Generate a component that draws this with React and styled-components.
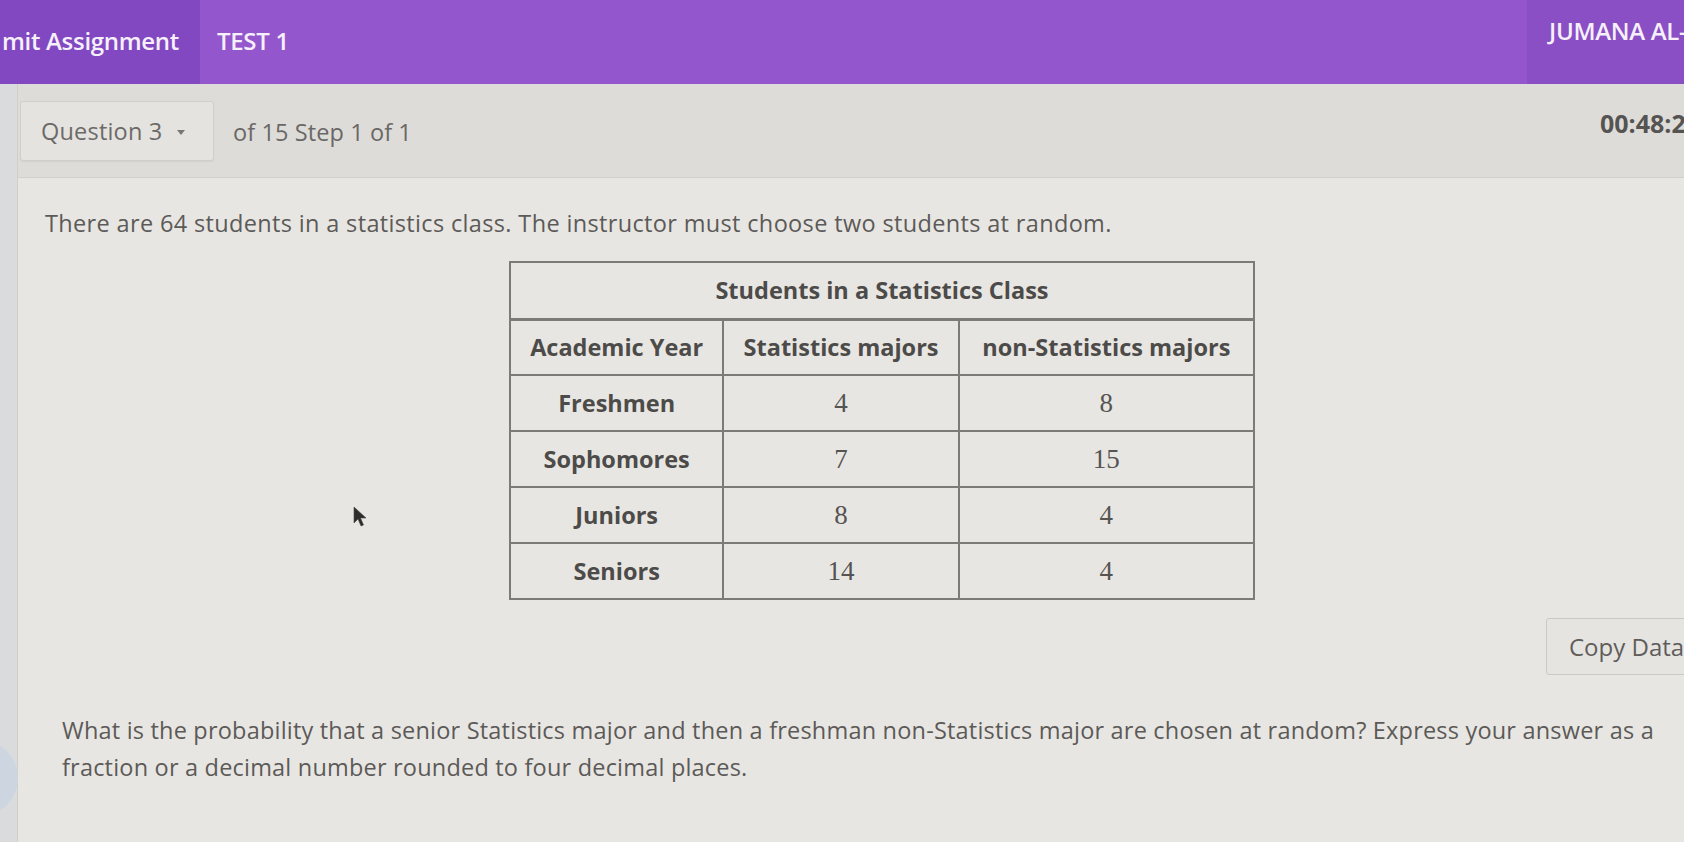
import React from "react";
import styled, { createGlobalStyle } from "styled-components";

const Global = createGlobalStyle`
  html, body { margin: 0; padding: 0; }
  body { background: #e6e4e0; font-family: "Open Sans", "Liberation Sans", sans-serif; }
  * { box-sizing: border-box; }
`;

const Page = styled.div`
  position: relative;
  width: 1684px;
  height: 842px;
  overflow: hidden;
  display: flex;
  flex-direction: column;
  background: #e8e6e2;
`;

const Header = styled.header`
  height: 84px;
  flex: none;
  display: flex;
  align-items: stretch;
  background: #9456cc;
  color: #f6f0fb;
  font-weight: 600;
  font-size: 24px;
  letter-spacing: -0.3px;
`;

const HeaderTab = styled.div`
  display: flex;
  align-items: ${(p) => p.$align || "center"};
  justify-content: ${(p) => p.$justify || "flex-start"};
  width: ${(p) => p.$width || "auto"};
  padding: ${(p) => p.$pad || "0"};
  background: ${(p) => p.$bg || "transparent"};
  white-space: nowrap;
  overflow: hidden;
`;

const HeaderSpacer = styled.div`
  flex: 1;
`;

const Body = styled.div`
  flex: 1;
  display: flex;
  min-height: 0;
`;

const SideStrip = styled.div`
  width: 18px;
  flex: none;
  background: #d9dbdc;
  border-right: 1px solid #cfcfcd;
`;

const Main = styled.div`
  flex: 1;
  display: flex;
  flex-direction: column;
  min-width: 0;
`;

const Toolbar = styled.div`
  height: 94px;
  flex: none;
  display: flex;
  align-items: flex-start;
  padding: 17px 0 0 2px;
  background: #dedcd8;
  border-bottom: 1px solid #d2d0cc;
  overflow: hidden;
`;

const QuestionSelect = styled.div`
  width: 194px;
  height: 60px;
  display: flex;
  align-items: center;
  gap: 14px;
  padding-left: 20px;
  background: #e5e3df;
  border: 1px solid #d1cfcb;
  border-radius: 3px;
  box-shadow: 0 1px 1px rgba(0, 0, 0, 0.05);
  color: #6c6a68;
  font-size: 23.5px;
  letter-spacing: 0.2px;
`;

const Caret = styled.span`
  width: 0;
  height: 0;
  border-left: 4px solid transparent;
  border-right: 4px solid transparent;
  border-top: 5px solid #7a7876;
  margin-top: 3px;
`;

const StepText = styled.div`
  margin: 15px 0 0 19px;
  color: #6a6866;
  font-size: 23.5px;
  letter-spacing: 0.1px;
`;

const Timer = styled.div`
  margin: 5px -16px 0 auto;
  color: #555452;
  font-weight: 700;
  font-size: 25px;
  white-space: nowrap;
`;

const Content = styled.div`
  flex: 1;
  display: flex;
  flex-direction: column;
  padding: 29px 0 0 27px;
  position: relative;
  color: #5c5a58;
`;

const Intro = styled.p`
  margin: 0;
  font-size: 23.5px;
  line-height: 32px;
  letter-spacing: 0.35px;
`;

const Table = styled.table`
  margin: 22px 0 0 464px;
  border-collapse: collapse;
  width: 746px;
  border: 2px solid #7c7b79;
  color: #4c4b49;
`;

const TitleCell = styled.th`
  height: 57px;
  font-weight: 700;
  font-size: 23.5px;
  letter-spacing: 0px;
  border-bottom: 3px solid #7c7b79;
  text-align: center;
`;

const HeadCell = styled.th`
  height: 56px;
  width: ${(p) => p.$w}px;
  font-weight: 700;
  font-size: 23.5px;
  letter-spacing: 0px;
  border: 2px solid #7c7b79;
  text-align: center;
  white-space: nowrap;
  padding: 0;
`;

const RowHead = styled.th`
  height: 56px;
  font-weight: 700;
  font-size: 23.5px;
  letter-spacing: 0px;
  border: 2px solid #7c7b79;
  text-align: center;
`;

const NumCell = styled.td`
  height: 56px;
  font-family: "Liberation Serif", "Times New Roman", serif;
  font-size: 27px;
  color: #555452;
  border: 2px solid #7c7b79;
  text-align: center;
`;

const CopyRow = styled.div`
  display: flex;
  justify-content: flex-end;
  margin-top: 18px;
  margin-right: -52px;
`;

const CopyButton = styled.button`
  height: 57px;
  width: 190px;
  padding: 0 0 0 22px;
  text-align: left;
  background: #e6e4e0;
  border: 1px solid #cbc9c5;
  border-radius: 3px;
  font-family: "Open Sans", "Liberation Sans", sans-serif;
  font-size: 24px;
  color: #5f5d5b;
  white-space: nowrap;
`;

const Question = styled.p`
  margin: 37px 0 0 17px;
  width: 1630px;
  font-size: 23.5px;
  line-height: 37px;
  letter-spacing: 0.2px;
`;

const HelpBubble = styled.div`
  position: absolute;
  left: -58px;
  top: 740px;
  width: 76px;
  height: 76px;
  border-radius: 50%;
  background: #cdd6e0;
`;

const Cursor = styled.svg`
  position: absolute;
  left: 352px;
  top: 506px;
`;

const rows = [
  ["Freshmen", 4, 8],
  ["Sophomores", 7, 15],
  ["Juniors", 8, 4],
  ["Seniors", 14, 4],
];

export default function App() {
  return (
    <>
      <Global />
      <Page>
        <Header>
          <HeaderTab $width="200px" $bg="#8148c2" $justify="flex-end" $pad="0 21px 4px 0">
            mit Assignment
          </HeaderTab>
          <HeaderTab $pad="0 0 4px 17px">TEST 1</HeaderTab>
          <HeaderSpacer />
          <HeaderTab $width="157px" $bg="#8a4fc5" $align="flex-start" $pad="14px 0 0 22px">
            JUMANA AL-
          </HeaderTab>
        </Header>
        <Body>
          <SideStrip />
          <Main>
            <Toolbar>
              <QuestionSelect>
                Question 3 <Caret />
              </QuestionSelect>
              <StepText>of 15 Step 1 of 1</StepText>
              <Timer>00:48:23</Timer>
            </Toolbar>
            <Content>
              <Intro>
                There are 64 students in a statistics class. The instructor must choose two students at random.
              </Intro>
              <Table>
                <thead>
                  <tr>
                    <TitleCell colSpan={3}>Students in a Statistics Class</TitleCell>
                  </tr>
                  <tr>
                    <HeadCell $w={214}>Academic Year</HeadCell>
                    <HeadCell $w={236}>Statistics majors</HeadCell>
                    <HeadCell $w={296}>non-Statistics majors</HeadCell>
                  </tr>
                </thead>
                <tbody>
                  {rows.map(([name, a, b]) => (
                    <tr key={name}>
                      <RowHead>{name}</RowHead>
                      <NumCell>{a}</NumCell>
                      <NumCell>{b}</NumCell>
                    </tr>
                  ))}
                </tbody>
              </Table>
              <CopyRow>
                <CopyButton>Copy Data</CopyButton>
              </CopyRow>
              <Question>
                What is the probability that a senior Statistics major and then a freshman non-Statistics major are chosen at random? Express your answer as a fraction or a decimal number rounded to four decimal places.
              </Question>
            </Content>
          </Main>
        </Body>
        <HelpBubble />
        <Cursor width="16" height="22" viewBox="0 0 16 22">
          <path d="M2 1 L2 17 L6 13 L9 20 L11.5 19 L8.5 12 L14 12 Z" fill="#2e2c2b" stroke="#4a4846" strokeWidth="0.6" />
        </Cursor>
      </Page>
    </>
  );
}
